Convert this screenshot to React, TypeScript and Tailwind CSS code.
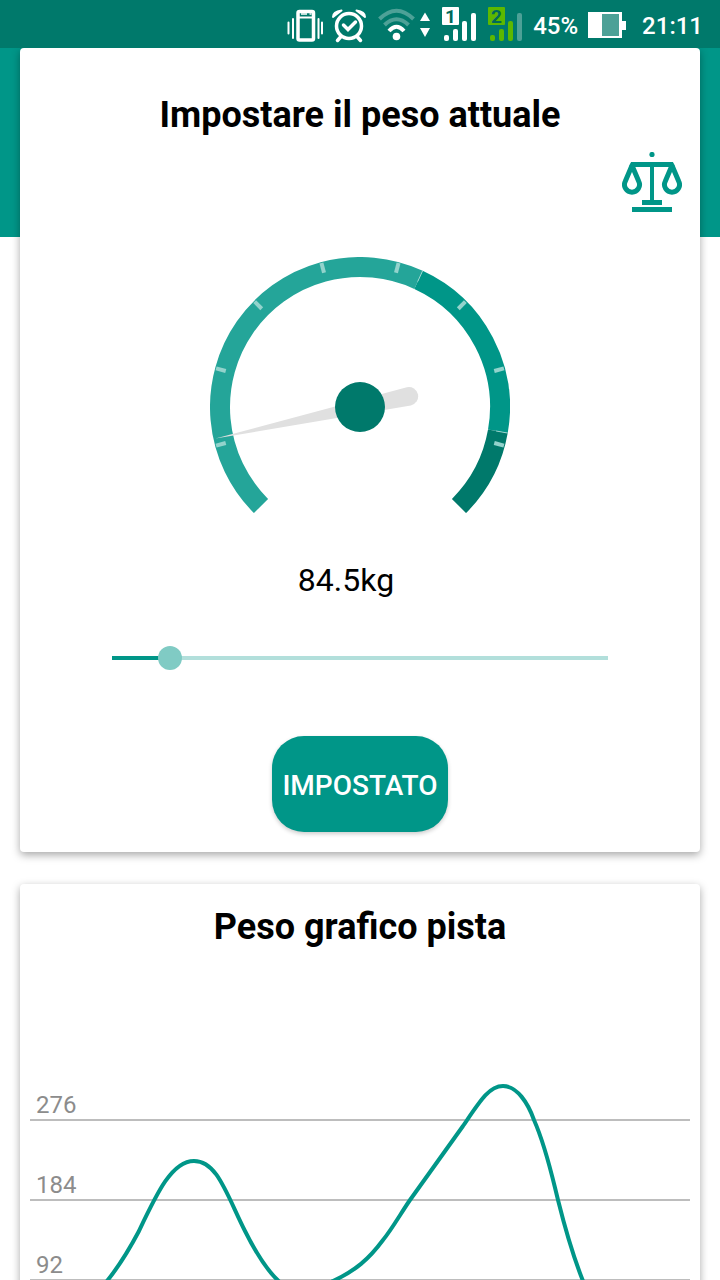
import { useState } from "react";
import type { ReactNode } from "react";

const MIN_WEIGHT = 20;
const MAX_WEIGHT = 570;

function VibrateIcon() {
    return (
        <svg className="h-12 w-9" viewBox="0 0 36 48" fill="none" stroke="#fff">
            <rect x="11" y="11.5" width="15.500" height="28.500" rx="1.500" strokeWidth="3.500" />
            <path d="M11 17.500h16" strokeWidth="2" />
            <path d="M14 14h6M22.500 14h2" strokeWidth="1.500" />
            <path d="M1.500 22.500v11M6 19v19M31.500 19v19M35 22.500v11" strokeWidth="2" strokeLinecap="round" />
        </svg>
    );
}

function AlarmIcon() {
    return (
        <svg className="h-12 w-[38px]" viewBox="0 0 38 48" fill="none" stroke="#fff" strokeLinecap="round">
            <circle cx="18" cy="26" r="12.500" strokeWidth="3.500" />
            <path d="M12.500 25l4.500 4.500 7.500-7.500" strokeWidth="3.500" />
            <path d="M10 36.500l-3.500 4M26 36.500l3.500 4" strokeWidth="3.500" />
            <path d="M2 17q0-5.500 8.500-6.500zM34 17q0-5.500-8.500-6.500z" fill="#fff" strokeWidth="2" strokeLinejoin="round" />
        </svg>
    );
}

function WifiIcon() {
    return (
        <svg className="h-12 w-14" viewBox="0 0 56 48" fill="none">
            <path d="M2.500 19Q19.500 2.500 36.500 19" stroke="#4da197" strokeWidth="4" />
            <path d="M7.500 25Q19.500 13.500 31.500 25" stroke="#4da197" strokeWidth="4" />
            <path d="M12 31Q19.500 22.500 27 31" stroke="#fff" strokeWidth="4" />
            <circle cx="19.500" cy="36.500" r="3.800" fill="#fff" />
            <path d="M48 12.500l5 8.500H43zM48 37l5-9H43z" fill="#fff" />
        </svg>
    );
}

function SimIcon({ slot, color, lastBar }: { slot: string; color: string; lastBar: string }) {
    return (
        <svg className="h-12 w-[38px]" viewBox="0 0 38 48">
            <rect x="1" y="7" width="17" height="18" rx="1" fill={color} />
            <text x="9.500" y="22.500" textAnchor="middle" fill="#00695c" className="font-['Roboto'] text-[19px] font-bold">
                {slot}
            </text>
            <g fill={color}>
                <rect x="3" y="35" width="5" height="6" rx="2" />
                <rect x="12" y="29" width="5" height="12" rx="2" />
                <rect x="21" y="21" width="5" height="20" rx="2" />
                <rect x="30" y="13" width="5" height="28" rx="2" fill={lastBar} />
            </g>
        </svg>
    );
}

function BatteryIcon() {
    return (
        <svg className="h-12 w-[46px]" viewBox="0 0 46 48">
            <path d="M0 12h34v9h4v9h-4v8H0z" fill="#fff" />
            <path d="M14 14h17v22H14z" fill="#4da197" />
        </svg>
    );
}

function StatusBar() {
    return (
        <header className="flex h-12 shrink-0 items-center justify-end gap-2 bg-[#00796b] pr-[17px] text-2xl font-medium text-white">
            <VibrateIcon />
            <AlarmIcon />
            <WifiIcon />
            <SimIcon slot="1" color="#fff" lastBar="#fff" />
            <SimIcon slot="2" color="#5db800" lastBar="#4da197" />
            <span className="pt-1 pr-0.5">45%</span>
            <BatteryIcon />
            <span className="pt-1">21:11</span>
        </header>
    );
}

function ScaleIcon() {
    return (
        <svg className="size-[60px]" viewBox="0 0 60 60" fill="none">
            <g fill="#009688">
                <circle cx="30" cy="2.500" r="2.600" />
                <path d="M9 10h42l2 5H7z" />
                <path d="M28 14h4v34h8v5H20v-5h8z" />
                <path d="M10 55h40v5H10z" />
            </g>
            <g stroke="#009688" strokeWidth="5" strokeLinejoin="round">
                <path d="M10 13.500L3.200 29.500A7.500 7.500 0 1 0 16.800 29.500Z" />
                <path d="M50 13.500L43.200 29.500A7.500 7.500 0 1 0 56.800 29.500Z" />
            </g>
        </svg>
    );
}

function point(angle: number, r: number) {
    const rad = (angle * Math.PI) / 180;
    return `${150 + r * Math.cos(rad)} ${150 + r * Math.sin(rad)}`;
}

const sections = [
    { from: 135, to: 294.7, color: "#24a599" },
    { from: 294.7, to: 370, color: "#009688" },
    { from: 370, to: 405, color: "#00796b" },
];
const ticks = [165, 195, 225, 255, 285, 315, 345, 375];

function Gauge({ ratio }: { ratio: number }) {
    return (
        <svg className="h-64 w-[300px]" viewBox="0 0 300 256" fill="none">
            {sections.map((s) => (
                <path key={s.from} d={`M${point(s.from, 140)}A140 140 0 0 1 ${point(s.to, 140)}`} stroke={s.color} strokeWidth="20" />
            ))}
            {[294.7, 370].map((a) => (
                <path key={a} d={`M${point(a, 138)}L${point(a, 150)}`} stroke="#b2dfdb" strokeWidth="0.800" />
            ))}
            {ticks.map((a) => (
                <path key={a} d={`M${point(a, 139)}L${point(a, 149)}`} stroke="#93d3cc" strokeWidth="4" />
            ))}
            <g transform={`rotate(${ratio * 270 - 44} 150 150)`}>
                <path d="M2 150L200 140.700A9.300 9.300 0 0 1 200 159.300Z" fill="#e0e0e0" />
            </g>
            <circle cx="150" cy="150" r="25" fill="#00796b" />
        </svg>
    );
}

function Card({ children, className }: { children: ReactNode; className: string }) {
    return (
        <section className={`flex flex-col items-center rounded-sm bg-white shadow-[0_3px_8px_rgba(0,0,0,0.35)] ${className}`}>
            {children}
        </section>
    );
}

function WeightChart() {
    return (
        <div className="relative mt-[92px] w-full px-2.5">
            {[276, 184, 92].map((v) => (
                <div key={v} className="flex h-20 items-end border-b-2 border-[#bdbdbd] pl-1.5 text-2xl leading-7 text-[#8c8c8c]">
                    {v}
                </div>
            ))}
            <svg className="absolute inset-x-0 top-0 h-80 w-full" viewBox="0 0 680 320" preserveAspectRatio="none" fill="none">
                <path
                    d="M60 272L87 240C100 224 110 207 119 190C137 152 152 120 174 120C197 120 206 152 225 190C240 220 252 235 262 243C278 256 295 252 313 240C335 230 349 218 363 199C372 188 381 172 390 159L443 85C460 60 469 45 483 45C497 45 508 62 514 79C526 106 532 135 538 159C547 195 555 220 563 240L575 275"
                    stroke="#009688"
                    strokeWidth="4"
                />
            </svg>
        </div>
    );
}

export default function App() {
    const [weight, setWeight] = useState(84.5);
    const ratio = (weight - MIN_WEIGHT) / (MAX_WEIGHT - MIN_WEIGHT);
    const percent = ratio * 100;

    return (
        <div className="flex h-screen flex-col overflow-hidden bg-white font-['Roboto',sans-serif] text-black">
            <StatusBar />
            <main className="flex min-h-0 flex-1 flex-col gap-8 overflow-hidden bg-[linear-gradient(#009688_189px,#fff_189px)] px-5">
                <Card className="shrink-0 pt-11 pb-5">
                    <h1 className="pt-px text-4xl leading-[44px] font-bold">Impostare il peso attuale</h1>
                    <button type="button" aria-label="Bilancia" className="mt-[15px] mr-[18px] self-end">
                        <ScaleIcon />
                    </button>
                    <div className="mt-[45px]">
                        <Gauge ratio={ratio} />
                    </div>
                    <output htmlFor="peso" className="mt-[47px] pr-7 text-[32px] leading-10">
                        {weight}kg
                    </output>
                    <input
                        id="peso"
                        type="range"
                        aria-label="Peso"
                        min={MIN_WEIGHT}
                        max={MAX_WEIGHT}
                        step={0.5}
                        value={weight}
                        onChange={(e) => setWeight(Number(e.target.value))}
                        style={{ backgroundImage: `linear-gradient(to right, #009688 ${percent}%, #b2dfdb ${percent}%)` }}
                        className="mt-[46px] h-6 w-[calc(100%-160px)] appearance-none bg-[length:calc(100%-24px)_4px] bg-center bg-no-repeat [&::-webkit-slider-thumb]:size-6 [&::-webkit-slider-thumb]:appearance-none [&::-webkit-slider-thumb]:rounded-full [&::-webkit-slider-thumb]:bg-[#80cbc4]"
                    />
                    <button type="button" className="mt-[66px] h-24 w-44 rounded-[32px] bg-[#009688] pt-1 text-[28px] font-medium text-white shadow-[0_2px_4px_rgba(0,0,0,0.2)]">
                        IMPOSTATO
                    </button>
                </Card>
                <Card className="min-h-[500px] pt-5">
                    <h2 className="pt-px text-4xl leading-[44px] font-bold">Peso grafico pista</h2>
                    <WeightChart />
                </Card>
            </main>
        </div>
    );
}
